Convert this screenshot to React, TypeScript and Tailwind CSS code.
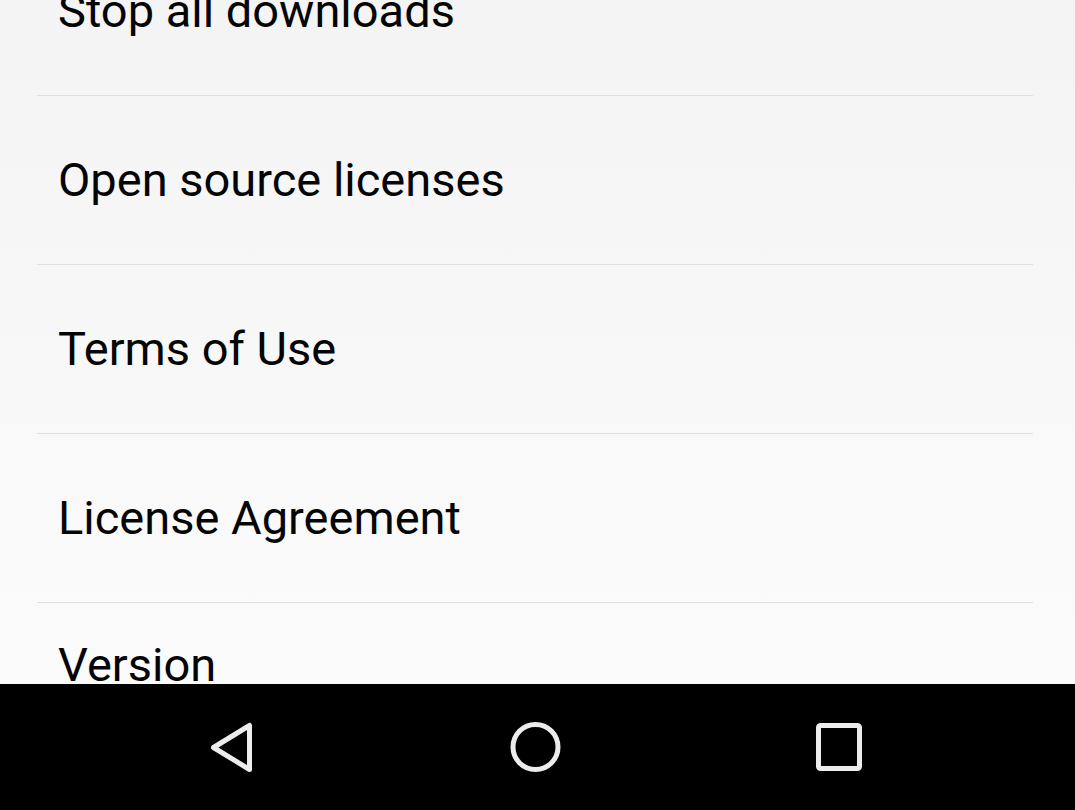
const items = [
  'Stop all downloads',
  'Open source licenses',
  'Terms of Use',
  'License Agreement',
];

function BackIcon() {
  return (
    <svg width="52" height="52" viewBox="0 0 52 52" fill="none">
      <path
        d="M43.5 4.5 L43.5 48.5 L7.5 26.5 Z"
        stroke="#ececec"
        strokeWidth="5"
        strokeLinejoin="round"
      />
    </svg>
  );
}

function HomeIcon() {
  return (
    <svg width="52" height="52" viewBox="0 0 52 52" fill="none">
      <circle cx="25.5" cy="26" r="22.5" stroke="#ececec" strokeWidth="5" />
    </svg>
  );
}

function RecentsIcon() {
  return (
    <svg width="52" height="52" viewBox="0 0 52 52" fill="none">
      <rect
        x="4.5"
        y="4.5"
        width="41"
        height="43"
        rx="2"
        stroke="#ececec"
        strokeWidth="5"
      />
    </svg>
  );
}

export default function App() {
  return (
    <div
      className="flex h-[810px] w-[1075px] flex-col overflow-hidden bg-black"
      style={{ fontFamily: 'Roboto, "Liberation Sans", sans-serif' }}
    >
      <div className="h-[684px] overflow-hidden bg-gradient-to-b from-[#f4f4f4] to-[#fbfbfb]">
        <div className="-mt-[73px] flex flex-col">
          {items.map((label) => (
            <div key={label} className="flex flex-col">
              <div className="flex h-[168px] items-center pl-[58px] pt-[1px] text-[47px] text-[#050505]">
                {label}
              </div>
              <div className="ml-[37px] mr-[42px] h-px bg-[#e0e0e0]" />
            </div>
          ))}
          <div className="flex flex-col pl-[58px] pt-[34px]">
            <div className="text-[47px] leading-[55px] text-[#050505]">Version</div>
          </div>
        </div>
      </div>
      <div className="flex h-[126px] items-center pl-[80px]">
        <div className="flex w-[304px] items-center justify-center">
          <BackIcon />
        </div>
        <div className="flex w-[304px] items-center justify-center">
          <HomeIcon />
        </div>
        <div className="flex w-[304px] items-center justify-center">
          <RecentsIcon />
        </div>
      </div>
    </div>
  );
}
